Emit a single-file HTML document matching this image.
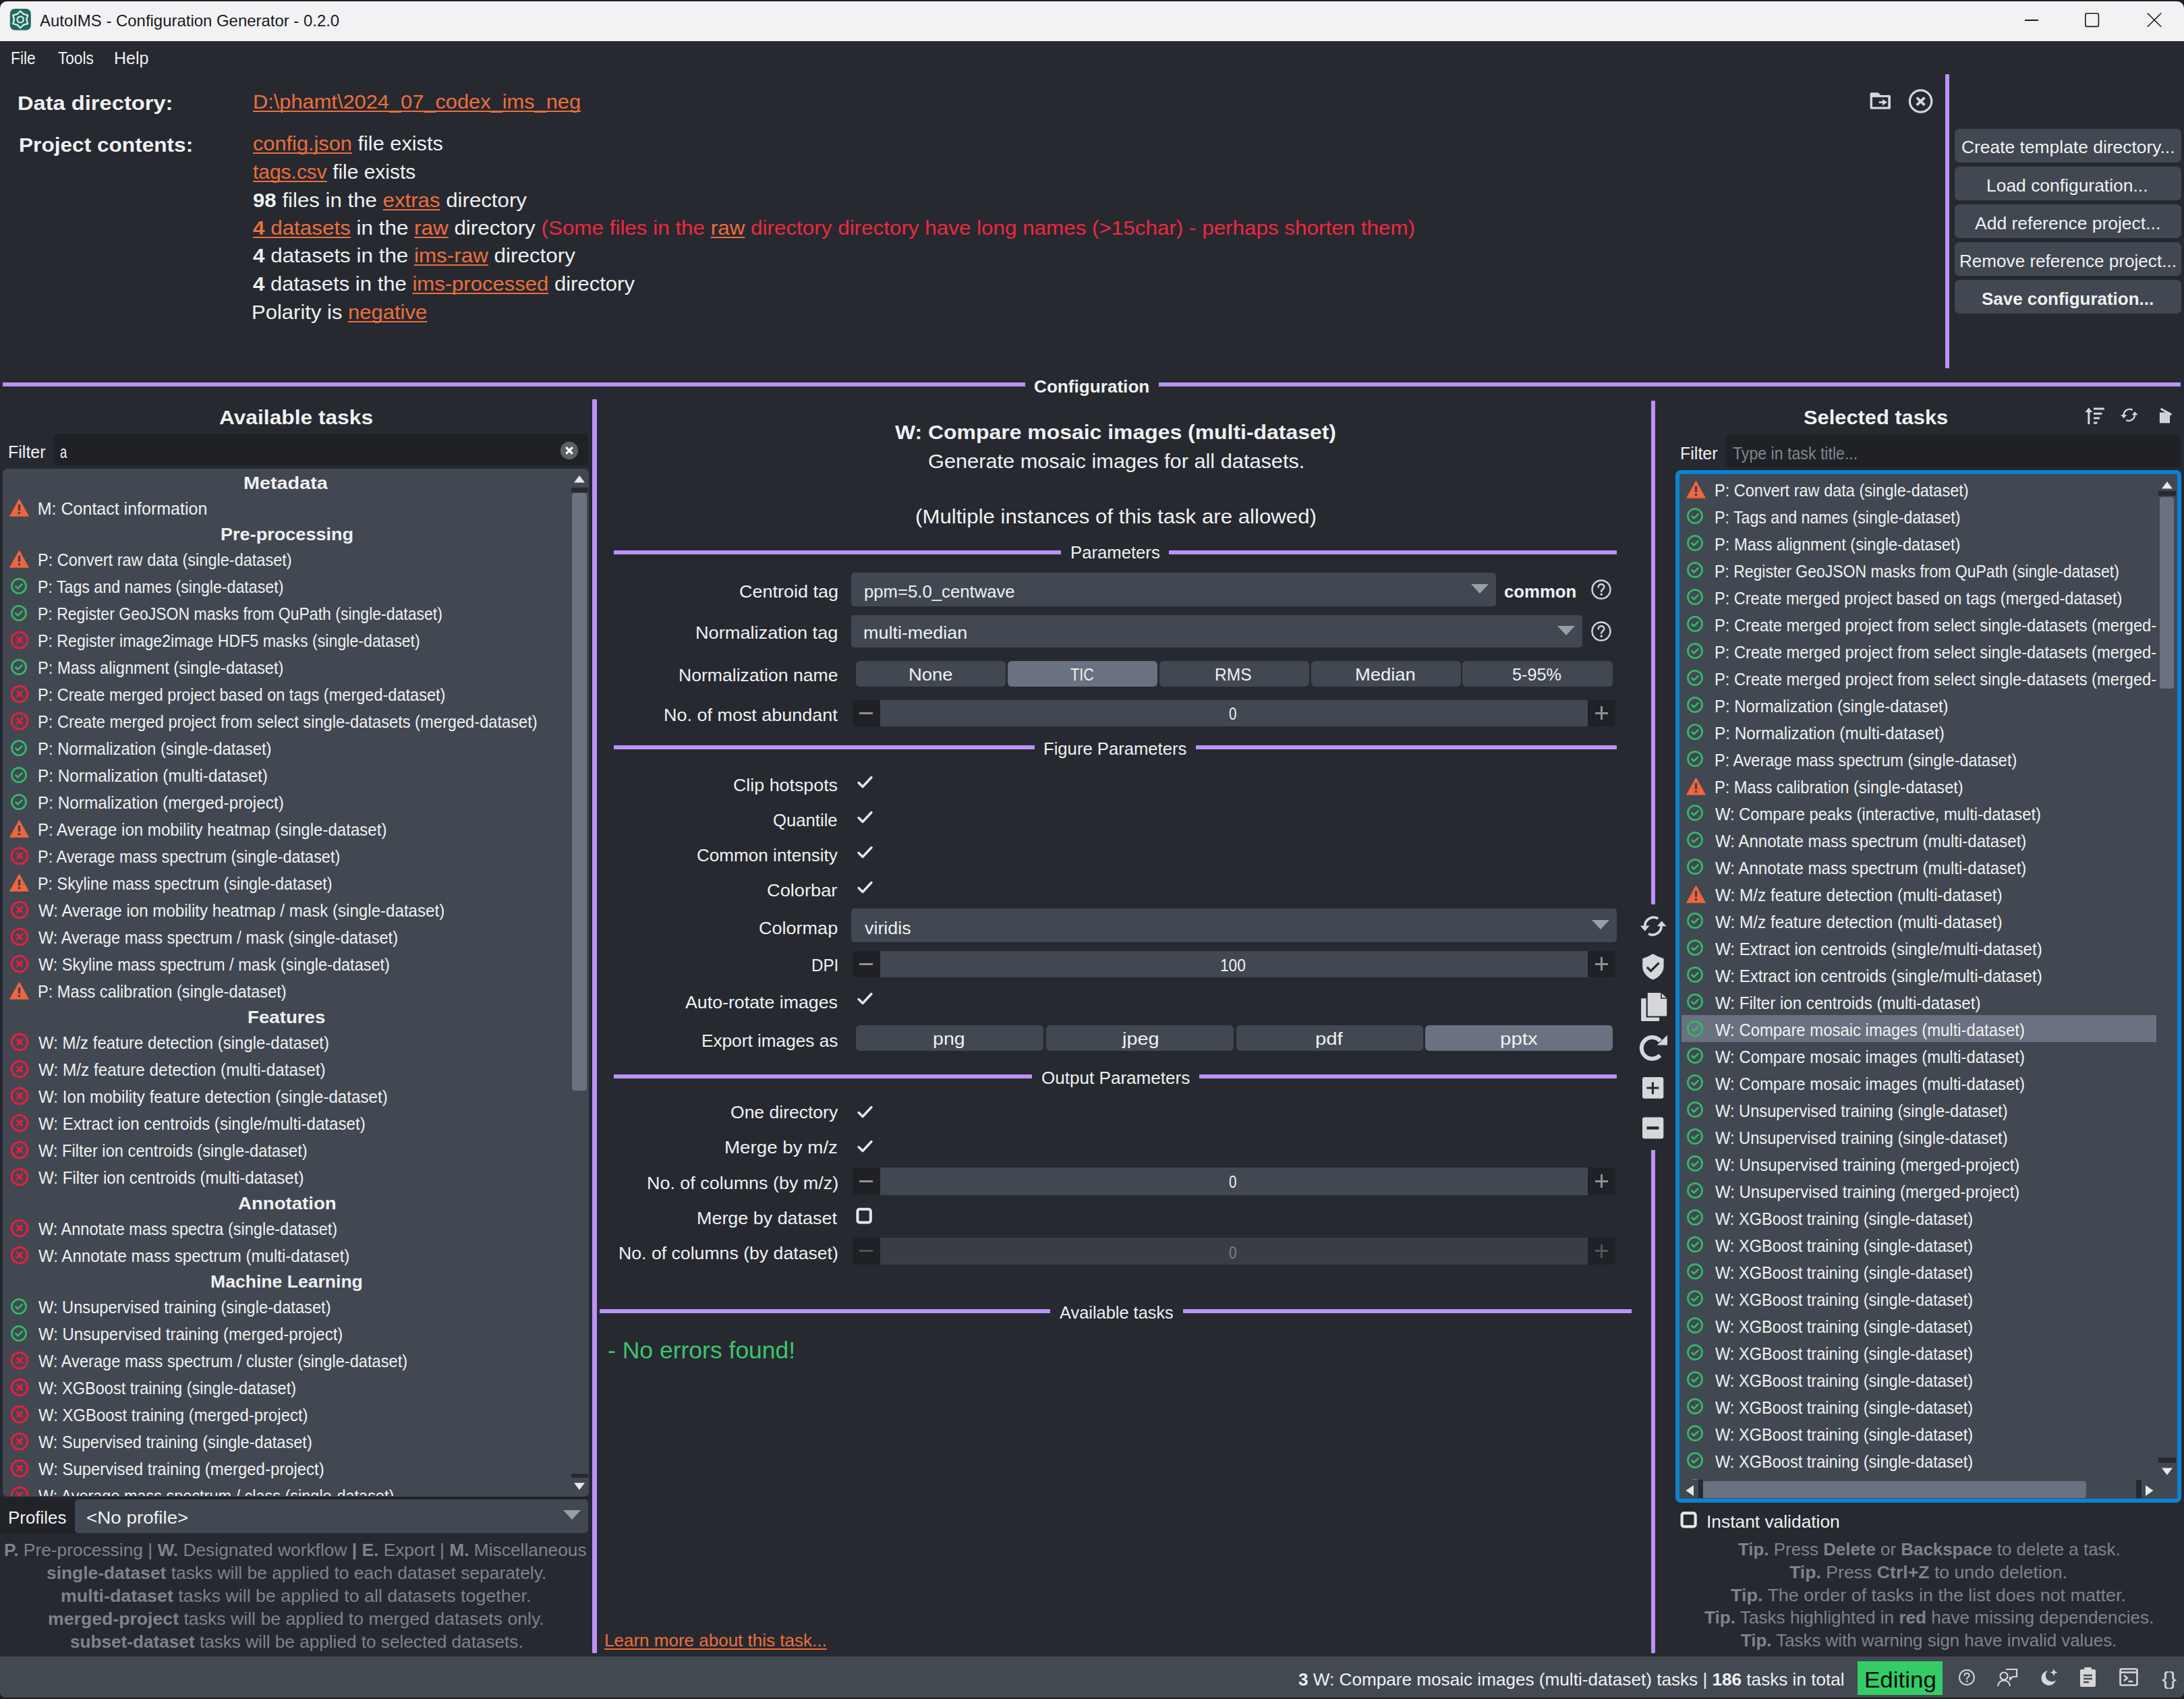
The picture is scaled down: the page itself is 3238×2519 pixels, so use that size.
<!DOCTYPE html><html><head><meta charset="utf-8"><title>AutoIMS</title><style>
*{margin:0;padding:0}
html,body{width:3238px;height:2519px;overflow:hidden;background:#1d1e22}
body{position:relative;font-family:"Liberation Sans",sans-serif}
.r,.t,.s,.clip{position:absolute}
.clip{overflow:hidden}
.t{white-space:nowrap;line-height:1;transform-origin:0 0}
.u{text-decoration:underline;text-decoration-thickness:2px;text-underline-offset:3px;color:#ef6e3c}
b{font-weight:700}
.u{text-decoration-skip-ink:none}
</style></head><body>
<svg width="0" height="0" style="position:absolute">
<defs>
<symbol id="warn" viewBox="0 0 29 27"><path d="M14.5 1.2 L28.4 26.2 L0.6 26.2 Z" fill="#f0653d" stroke="#f0653d" stroke-width="1" stroke-linejoin="round"/><rect x="12.9" y="9" width="3.2" height="9" fill="#3d424a"/><rect x="12.9" y="20" width="3.2" height="3.2" fill="#3d424a"/></symbol>
<symbol id="ok" viewBox="0 0 26 26"><circle cx="13" cy="13" r="10.6" fill="none" stroke="#34b86a" stroke-width="2.7"/><path d="M7.6 12.8 L11.4 16.4 L18.4 9.6" fill="none" stroke="#34b86a" stroke-width="2.7"/></symbol>
<symbol id="err" viewBox="0 0 28 28"><circle cx="14" cy="14" r="11.8" fill="none" stroke="#e81e40" stroke-width="3"/><path d="M9.6 9.4 L18.4 18.4 M18.4 9.4 L9.6 18.4" fill="none" stroke="#e81e40" stroke-width="3"/></symbol>
<symbol id="chk" viewBox="0 0 24 24"><path d="M2.5 12.5 L8.5 18.5 L21.5 4.5" fill="none" stroke="#e6e7e9" stroke-width="3.4" stroke-linecap="round" stroke-linejoin="round"/></symbol>
<symbol id="help" viewBox="0 0 32 32"><circle cx="16" cy="16" r="13.5" fill="none" stroke="#d4d6d9" stroke-width="2.4"/><path d="M11.6 12.6 C11.6 9.8 13.6 8.2 16 8.2 C18.6 8.2 20.4 9.9 20.4 12.2 C20.4 15.4 16.2 15.6 16.2 19" fill="none" stroke="#d4d6d9" stroke-width="2.4" stroke-linecap="round"/><circle cx="16.2" cy="23.2" r="1.7" fill="#d4d6d9"/></symbol>
<symbol id="ddarrow" viewBox="0 0 28 16"><path d="M1 1 L27 1 L14 15 Z" fill="#9a9fa6"/></symbol>
</defs></svg>
<div class="r" style="left:0.0px;top:2.0px;width:3238.0px;height:59.0px;background:#f2f2f5;border-radius:10px 10px 0 0;"></div>
<svg class="s" style="left:14.0px;top:13.0px" width="32" height="32" viewBox="0 0 32 32"><rect x="0.8" y="0" width="31" height="31.8" rx="7" fill="#1f6a5d"/><path d="M16.20 3.30 L20.80 7.93 L27.11 9.60 L25.40 15.90 L27.11 22.20 L20.80 23.87 L16.20 28.50 L11.60 23.87 L5.29 22.20 L7.00 15.90 L5.29 9.60 L11.60 7.93 Z" fill="none" stroke="#dcefea" stroke-width="2.3" stroke-linejoin="round"/><circle cx="16.2" cy="15.9" r="4.6" fill="none" stroke="#dcefea" stroke-width="2.2"/></svg>
<div class="t" id="t0" style="left:58.9px;top:19.0px;font-size:24px;color:#1a1a1a;transform:scaleX(0.9969);">AutoIMS - Configuration Generator - 0.2.0</div>
<div class="r" style="left:3001.5px;top:29.2px;width:20.5px;height:2.2px;background:#1a1a1a;"></div>
<svg class="s" style="left:3090.0px;top:18.0px" width="24" height="24" viewBox="0 0 24 24"><rect x="1.8" y="1.8" width="19.6" height="19.6" rx="2.5" fill="none" stroke="#1a1a1a" stroke-width="1.6"/></svg>
<svg class="s" style="left:3182.0px;top:18.0px" width="24" height="24" viewBox="0 0 24 24"><path d="M1.8 1.5 L22.2 21.8 M22.2 1.5 L1.8 21.8" stroke="#1a1a1a" stroke-width="1.6"/></svg>
<div class="r" style="left:0.0px;top:61.0px;width:3238.0px;height:2395.0px;background:#262930;"></div>
<div class="t" id="t1" style="left:15.9px;top:74.0px;font-size:25px;color:#f0f1f2;transform:scaleX(0.9128);">File</div>
<div class="t" id="t2" style="left:85.6px;top:74.0px;font-size:25px;color:#f0f1f2;transform:scaleX(0.9034);">Tools</div>
<div class="t" id="t3" style="left:169.0px;top:74.0px;font-size:25px;color:#f0f1f2;">Help</div>
<div class="t" id="t4" style="left:26.1px;top:138.0px;font-size:30px;font-weight:700;color:#f0f1f2;transform:scaleX(1.0885);">Data directory:</div>
<div class="t" id="t5" style="left:375.0px;top:136.0px;font-size:30px;color:#ef6e3c;transform:scaleX(1.0262);"><span class="u">D:\phamt\2024_07_codex_ims_neg</span></div>
<div class="t" id="t6" style="left:27.9px;top:200.0px;font-size:30px;font-weight:700;color:#f0f1f2;transform:scaleX(1.0537);">Project contents:</div>
<div class="t" id="t7" style="left:375.0px;top:198.0px;font-size:30px;color:#f0f1f2;transform:scaleX(1.0244);"><span class="u">config.json</span> file exists</div>
<div class="t" id="t8" style="left:375.0px;top:240.0px;font-size:30px;color:#f0f1f2;transform:scaleX(0.9979);"><span class="u">tags.csv</span> file exists</div>
<div class="t" id="t9" style="left:375.0px;top:282.0px;font-size:30px;color:#f0f1f2;transform:scaleX(1.0402);"><b>98</b> files in the <span class="u">extras</span> directory</div>
<div class="t" id="t10" style="left:375.0px;top:323.0px;font-size:30px;color:#f0f1f2;transform:scaleX(1.0464);"><span class="u"><b>4</b> datasets</span> in the <span class="u">raw</span> directory <span style="color:#f0283e">(Some files in the <span class="u">raw</span> directory directory have long names (&gt;15char) - perhaps shorten them)</span></div>
<div class="t" id="t11" style="left:375.0px;top:364.0px;font-size:30px;color:#f0f1f2;transform:scaleX(1.0460);"><b>4</b> datasets in the <span class="u">ims-raw</span> directory</div>
<div class="t" id="t12" style="left:375.0px;top:406.0px;font-size:30px;color:#f0f1f2;transform:scaleX(1.0347);"><b>4</b> datasets in the <span class="u">ims-processed</span> directory</div>
<div class="t" id="t13" style="left:372.9px;top:448.0px;font-size:30px;color:#f0f1f2;transform:scaleX(1.0336);">Polarity is <span class="u">negative</span></div>
<svg class="s" style="left:2770.0px;top:134.0px" width="36" height="30" viewBox="0 0 36 30"><path d="M2.6 5 Q2.6 3.2 4.4 3.2 L14.6 3.2 L18.2 7 L31.2 7 Q33 7 33 8.8 L33 26 Q33 27.8 31.2 27.8 L4.4 27.8 Q2.6 27.8 2.6 26 Z" fill="#d4d6d9"/><rect x="6" y="10.2" width="23.3" height="14.3" fill="#262930"/><path d="M15.6 17.6 L22.8 17.6" stroke="#d4d6d9" stroke-width="2.8"/><path d="M21 13 L27.9 17.6 L21 22.6 Z" fill="#d4d6d9"/></svg>
<svg class="s" style="left:2829.0px;top:131.0px" width="38" height="38" viewBox="0 0 38 38"><circle cx="18.6" cy="19" r="16.2" fill="none" stroke="#d4d6d9" stroke-width="3.2"/><path d="M12.8 13.6 L24.4 24.8 M24.4 13.6 L12.8 24.8" stroke="#d4d6d9" stroke-width="3.8"/></svg>
<div class="r" style="left:2884.0px;top:110.0px;width:6.0px;height:436.0px;background:#bb92f5;border-radius:1px;"></div>
<div class="r" style="left:2898.0px;top:191.0px;width:335.5px;height:49.5px;background:#414851;border-radius:7px;"></div>
<div class="t" id="t14" style="left:2907.9px;top:206.0px;font-size:25px;color:#f0f1f2;transform:scaleX(1.0562);">Create template directory...</div>
<div class="r" style="left:2898.0px;top:247.1px;width:335.5px;height:49.5px;background:#414851;border-radius:7px;"></div>
<div class="t" id="t15" style="left:2945.3px;top:263.0px;font-size:25px;color:#f0f1f2;transform:scaleX(1.0571);">Load configuration...</div>
<div class="r" style="left:2898.0px;top:303.2px;width:335.5px;height:49.5px;background:#414851;border-radius:7px;"></div>
<div class="t" id="t16" style="left:2928.3px;top:319.0px;font-size:25px;color:#f0f1f2;transform:scaleX(1.0593);">Add reference project...</div>
<div class="r" style="left:2898.0px;top:359.3px;width:335.5px;height:49.5px;background:#414851;border-radius:7px;"></div>
<div class="t" id="t17" style="left:2905.3px;top:375.0px;font-size:25px;color:#f0f1f2;transform:scaleX(1.0435);">Remove reference project...</div>
<div class="r" style="left:2898.0px;top:415.4px;width:335.5px;height:49.5px;background:#414851;border-radius:7px;"></div>
<div class="t" id="t18" style="left:2938.0px;top:431.0px;font-size:25px;font-weight:700;color:#f0f1f2;transform:scaleX(1.0376);">Save configuration...</div>
<div class="r" style="left:4.0px;top:567.0px;width:1515.5px;height:6.0px;background:#bb92f5;"></div>
<div class="r" style="left:1718.3px;top:567.0px;width:1514.7px;height:6.0px;background:#bb92f5;"></div>
<div class="t" id="t19" style="left:1533.3px;top:560.0px;font-size:26px;font-weight:700;color:#f0f1f2;transform:scaleX(1.0053);">Configuration</div>
<div class="t" id="t20" style="left:324.7px;top:604.0px;font-size:30px;font-weight:700;color:#f0f1f2;transform:scaleX(1.0572);">Available tasks</div>
<div class="t" id="t21" style="left:12.0px;top:658.0px;font-size:25px;color:#f0f1f2;">Filter</div>
<div class="r" style="left:80.3px;top:643.4px;width:791.7px;height:47.1px;background:#1f2126;border-radius:5px;"></div>
<div class="t" id="t22" style="left:89.0px;top:658.0px;font-size:25px;color:#f0f1f2;transform:scaleX(0.7333);">a</div>
<svg class="s" style="left:830.0px;top:654.0px" width="28" height="28" viewBox="0 0 28 28"><circle cx="14" cy="14" r="13.2" fill="#5b5f66"/><path d="M9.2 9.2 L18.8 18.8 M18.8 9.2 L9.2 18.8" stroke="#ffffff" stroke-width="3.2"/></svg>
<div class="r" style="left:4.0px;top:695.0px;width:869.0px;height:1523.5px;background:#414851;border-radius:7px;"></div>
<div class="clip" style="left:4px;top:695px;width:843px;height:1523px">
<div class="t" id="t23" style="left:357.4px;top:9.0px;font-size:25px;font-weight:700;color:#f0f1f2;transform:scaleX(1.1519);">Metadata</div>
<svg class="s" style="left:9.9px;top:44.0px" width="29" height="27"><use href="#warn"/></svg>
<div class="t" id="t24" style="left:51.8px;top:47.0px;font-size:25px;color:#f0f1f2;">M: Contact information</div>
<div class="t" id="t25" style="left:323.3px;top:85.0px;font-size:25px;font-weight:700;color:#f0f1f2;transform:scaleX(1.0828);">Pre-processing</div>
<svg class="s" style="left:9.9px;top:120.0px" width="29" height="27"><use href="#warn"/></svg>
<div class="t" id="t26" style="left:51.9px;top:123.0px;font-size:25px;color:#f0f1f2;transform:scaleX(0.9412);">P: Convert raw data (single-dataset)</div>
<svg class="s" style="left:11.0px;top:160.8px" width="26" height="26"><use href="#ok"/></svg>
<div class="t" id="t27" style="left:51.9px;top:163.0px;font-size:25px;color:#f0f1f2;transform:scaleX(0.9276);">P: Tags and names (single-dataset)</div>
<svg class="s" style="left:11.0px;top:200.8px" width="26" height="26"><use href="#ok"/></svg>
<div class="t" id="t28" style="left:51.9px;top:203.0px;font-size:25px;color:#f0f1f2;transform:scaleX(0.9206);">P: Register GeoJSON masks from QuPath (single-dataset)</div>
<svg class="s" style="left:10.8px;top:240.0px" width="28" height="28"><use href="#err"/></svg>
<div class="t" id="t29" style="left:51.9px;top:243.0px;font-size:25px;color:#f0f1f2;transform:scaleX(0.9271);">P: Register image2image HDF5 masks (single-dataset)</div>
<svg class="s" style="left:11.0px;top:280.8px" width="26" height="26"><use href="#ok"/></svg>
<div class="t" id="t30" style="left:51.9px;top:283.0px;font-size:25px;color:#f0f1f2;transform:scaleX(0.9470);">P: Mass alignment (single-dataset)</div>
<svg class="s" style="left:10.8px;top:320.0px" width="28" height="28"><use href="#err"/></svg>
<div class="t" id="t31" style="left:51.9px;top:323.0px;font-size:25px;color:#f0f1f2;transform:scaleX(0.9414);">P: Create merged project based on tags (merged-dataset)</div>
<svg class="s" style="left:10.8px;top:360.0px" width="28" height="28"><use href="#err"/></svg>
<div class="t" id="t32" style="left:51.9px;top:363.0px;font-size:25px;color:#f0f1f2;transform:scaleX(0.9468);">P: Create merged project from select single-datasets (merged-dataset)</div>
<svg class="s" style="left:11.0px;top:400.8px" width="26" height="26"><use href="#ok"/></svg>
<div class="t" id="t33" style="left:51.8px;top:403.0px;font-size:25px;color:#f0f1f2;transform:scaleX(0.9557);">P: Normalization (single-dataset)</div>
<svg class="s" style="left:11.0px;top:440.8px" width="26" height="26"><use href="#ok"/></svg>
<div class="t" id="t34" style="left:51.8px;top:443.0px;font-size:25px;color:#f0f1f2;transform:scaleX(0.9736);">P: Normalization (multi-dataset)</div>
<svg class="s" style="left:11.0px;top:480.8px" width="26" height="26"><use href="#ok"/></svg>
<div class="t" id="t35" style="left:51.8px;top:483.0px;font-size:25px;color:#f0f1f2;transform:scaleX(0.9724);">P: Normalization (merged-project)</div>
<svg class="s" style="left:9.9px;top:520.0px" width="29" height="27"><use href="#warn"/></svg>
<div class="t" id="t36" style="left:51.8px;top:523.0px;font-size:25px;color:#f0f1f2;transform:scaleX(0.9630);">P: Average ion mobility heatmap (single-dataset)</div>
<svg class="s" style="left:10.8px;top:560.0px" width="28" height="28"><use href="#err"/></svg>
<div class="t" id="t37" style="left:51.9px;top:563.0px;font-size:25px;color:#f0f1f2;transform:scaleX(0.9387);">P: Average mass spectrum (single-dataset)</div>
<svg class="s" style="left:9.9px;top:600.0px" width="29" height="27"><use href="#warn"/></svg>
<div class="t" id="t38" style="left:51.9px;top:603.0px;font-size:25px;color:#f0f1f2;transform:scaleX(0.9351);">P: Skyline mass spectrum (single-dataset)</div>
<svg class="s" style="left:10.8px;top:640.0px" width="28" height="28"><use href="#err"/></svg>
<div class="t" id="t39" style="left:52.8px;top:643.0px;font-size:25px;color:#f0f1f2;transform:scaleX(0.9645);">W: Average ion mobility heatmap / mask (single-dataset)</div>
<svg class="s" style="left:10.8px;top:680.0px" width="28" height="28"><use href="#err"/></svg>
<div class="t" id="t40" style="left:52.8px;top:683.0px;font-size:25px;color:#f0f1f2;transform:scaleX(0.9441);">W: Average mass spectrum / mask (single-dataset)</div>
<svg class="s" style="left:10.8px;top:720.0px" width="28" height="28"><use href="#err"/></svg>
<div class="t" id="t41" style="left:52.8px;top:723.0px;font-size:25px;color:#f0f1f2;transform:scaleX(0.9405);">W: Skyline mass spectrum / mask (single-dataset)</div>
<svg class="s" style="left:9.9px;top:760.0px" width="29" height="27"><use href="#warn"/></svg>
<div class="t" id="t42" style="left:51.9px;top:763.0px;font-size:25px;color:#f0f1f2;transform:scaleX(0.9443);">P: Mass calibration (single-dataset)</div>
<div class="t" id="t43" style="left:362.9px;top:801.0px;font-size:25px;font-weight:700;color:#f0f1f2;transform:scaleX(1.1068);">Features</div>
<svg class="s" style="left:10.8px;top:836.0px" width="28" height="28"><use href="#err"/></svg>
<div class="t" id="t44" style="left:52.8px;top:839.0px;font-size:25px;color:#f0f1f2;transform:scaleX(0.9581);">W: M/z feature detection (single-dataset)</div>
<svg class="s" style="left:10.8px;top:876.0px" width="28" height="28"><use href="#err"/></svg>
<div class="t" id="t45" style="left:52.8px;top:879.0px;font-size:25px;color:#f0f1f2;transform:scaleX(0.9736);">W: M/z feature detection (multi-dataset)</div>
<svg class="s" style="left:10.8px;top:916.0px" width="28" height="28"><use href="#err"/></svg>
<div class="t" id="t46" style="left:52.8px;top:919.0px;font-size:25px;color:#f0f1f2;transform:scaleX(0.9660);">W: Ion mobility feature detection (single-dataset)</div>
<svg class="s" style="left:10.8px;top:956.0px" width="28" height="28"><use href="#err"/></svg>
<div class="t" id="t47" style="left:52.8px;top:959.0px;font-size:25px;color:#f0f1f2;transform:scaleX(0.9645);">W: Extract ion centroids (single/multi-dataset)</div>
<svg class="s" style="left:10.8px;top:996.0px" width="28" height="28"><use href="#err"/></svg>
<div class="t" id="t48" style="left:52.8px;top:999.0px;font-size:25px;color:#f0f1f2;transform:scaleX(0.9481);">W: Filter ion centroids (single-dataset)</div>
<svg class="s" style="left:10.8px;top:1036.0px" width="28" height="28"><use href="#err"/></svg>
<div class="t" id="t49" style="left:52.8px;top:1039.0px;font-size:25px;color:#f0f1f2;transform:scaleX(0.9644);">W: Filter ion centroids (multi-dataset)</div>
<div class="t" id="t50" style="left:348.9px;top:1077.0px;font-size:25px;font-weight:700;color:#f0f1f2;transform:scaleX(1.1038);">Annotation</div>
<svg class="s" style="left:10.8px;top:1112.0px" width="28" height="28"><use href="#err"/></svg>
<div class="t" id="t51" style="left:52.8px;top:1115.0px;font-size:25px;color:#f0f1f2;transform:scaleX(0.9417);">W: Annotate mass spectra (single-dataset)</div>
<svg class="s" style="left:10.8px;top:1152.0px" width="28" height="28"><use href="#err"/></svg>
<div class="t" id="t52" style="left:52.8px;top:1155.0px;font-size:25px;color:#f0f1f2;transform:scaleX(0.9634);">W: Annotate mass spectrum (multi-dataset)</div>
<div class="t" id="t53" style="left:308.2px;top:1193.0px;font-size:25px;font-weight:700;color:#f0f1f2;transform:scaleX(1.0626);">Machine Learning</div>
<svg class="s" style="left:11.0px;top:1228.8px" width="26" height="26"><use href="#ok"/></svg>
<div class="t" id="t54" style="left:52.8px;top:1231.0px;font-size:25px;color:#f0f1f2;transform:scaleX(0.9464);">W: Unsupervised training (single-dataset)</div>
<svg class="s" style="left:11.0px;top:1268.8px" width="26" height="26"><use href="#ok"/></svg>
<div class="t" id="t55" style="left:52.8px;top:1271.0px;font-size:25px;color:#f0f1f2;transform:scaleX(0.9591);">W: Unsupervised training (merged-project)</div>
<svg class="s" style="left:10.8px;top:1308.0px" width="28" height="28"><use href="#err"/></svg>
<div class="t" id="t56" style="left:52.8px;top:1311.0px;font-size:25px;color:#f0f1f2;transform:scaleX(0.9458);">W: Average mass spectrum / cluster (single-dataset)</div>
<svg class="s" style="left:10.8px;top:1348.0px" width="28" height="28"><use href="#err"/></svg>
<div class="t" id="t57" style="left:52.8px;top:1351.0px;font-size:25px;color:#f0f1f2;transform:scaleX(0.9428);">W: XGBoost training (single-dataset)</div>
<svg class="s" style="left:10.8px;top:1388.0px" width="28" height="28"><use href="#err"/></svg>
<div class="t" id="t58" style="left:52.8px;top:1391.0px;font-size:25px;color:#f0f1f2;transform:scaleX(0.9564);">W: XGBoost training (merged-project)</div>
<svg class="s" style="left:10.8px;top:1428.0px" width="28" height="28"><use href="#err"/></svg>
<div class="t" id="t59" style="left:52.8px;top:1431.0px;font-size:25px;color:#f0f1f2;transform:scaleX(0.9429);">W: Supervised training (single-dataset)</div>
<svg class="s" style="left:10.8px;top:1468.0px" width="28" height="28"><use href="#err"/></svg>
<div class="t" id="t60" style="left:52.8px;top:1471.0px;font-size:25px;color:#f0f1f2;transform:scaleX(0.9568);">W: Supervised training (merged-project)</div>
<svg class="s" style="left:10.8px;top:1508.0px" width="28" height="28"><use href="#err"/></svg>
<div class="t" id="t61" style="left:52.8px;top:1511.0px;font-size:25px;color:#f0f1f2;transform:scaleX(0.9385);">W: Average mass spectrum / class (single-dataset)</div>
</div>
<svg class="s" style="left:850.0px;top:704.0px" width="18" height="12" viewBox="0 0 18 12"><path d="M1 11.5 L9 1 L17 11.5 Z" fill="#e8e8ea"/></svg>
<div class="r" style="left:847.0px;top:723.0px;width:25.0px;height:6.5px;background:#262930;"></div>
<div class="r" style="left:848.0px;top:731.0px;width:22.0px;height:886.0px;background:#6a7180;border-radius:4px;"></div>
<div class="r" style="left:847.0px;top:2184.5px;width:25.0px;height:6.5px;background:#262930;"></div>
<svg class="s" style="left:850.0px;top:2198.0px" width="18" height="12" viewBox="0 0 18 12"><path d="M1 0.5 L17 0.5 L9 11 Z" fill="#e8e8ea"/></svg>
<div class="r" style="left:0.0px;top:2218.5px;width:872.0px;height:54.5px;background:#212329;"></div>
<div class="r" style="left:110.8px;top:2223.0px;width:761.6px;height:49.5px;background:#414851;border-radius:5px;"></div>
<div class="t" id="t62" style="left:12.0px;top:2238.0px;font-size:25px;color:#f0f1f2;transform:scaleX(1.0366);">Profiles</div>
<div class="t" id="t63" style="left:127.9px;top:2238.0px;font-size:25px;color:#f0f1f2;transform:scaleX(1.1111);">&lt;No profile&gt;</div>
<svg class="s" style="left:834.0px;top:2238.0px" width="28" height="16"><use href="#ddarrow"/></svg>
<div class="t" id="t64" style="left:6.2px;top:2286.0px;font-size:25px;color:#7d848c;transform:scaleX(1.0534);"><b>P.</b> Pre-processing | <b>W.</b> Designated workflow <b>| E.</b> Export | <b>M.</b> Miscellaneous</div>
<div class="t" id="t65" style="left:68.5px;top:2320.0px;font-size:25px;color:#7d848c;transform:scaleX(1.0549);"><b>single-dataset</b> tasks will be applied to each dataset separately.</div>
<div class="t" id="t66" style="left:89.6px;top:2354.0px;font-size:25px;color:#7d848c;transform:scaleX(1.0725);"><b>multi-dataset</b> tasks will be applied to all datasets together.</div>
<div class="t" id="t67" style="left:71.4px;top:2388.0px;font-size:25px;color:#7d848c;transform:scaleX(1.0661);"><b>merged-project</b> tasks will be applied to merged datasets only.</div>
<div class="t" id="t68" style="left:104.0px;top:2422.0px;font-size:25px;color:#7d848c;transform:scaleX(1.0463);"><b>subset-dataset</b> tasks will be applied to selected datasets.</div>
<div class="r" style="left:878.0px;top:592.0px;width:6.5px;height:1858.5px;background:#bb92f5;border-radius:1px;"></div>
<div class="r" style="left:2448.0px;top:594.0px;width:6.0px;height:747.0px;background:#bb92f5;border-radius:1px;"></div>
<div class="r" style="left:2448.0px;top:1704.5px;width:6.0px;height:746.0px;background:#bb92f5;border-radius:1px;"></div>
<div class="t" id="t69" style="left:1326.7px;top:627.0px;font-size:29px;font-weight:700;color:#f0f1f2;transform:scaleX(1.1008);">W: Compare mosaic images (multi-dataset)</div>
<div class="t" id="t70" style="left:1375.8px;top:670.0px;font-size:29px;color:#f0f1f2;transform:scaleX(1.0594);">Generate mosaic images for all datasets.</div>
<div class="t" id="t71" style="left:1356.6px;top:752.0px;font-size:29px;color:#f0f1f2;transform:scaleX(1.0760);">(Multiple instances of this task are allowed)</div>
<div class="r" style="left:910.4px;top:815.5px;width:663.1px;height:6.0px;background:#bb92f5;"></div>
<div class="r" style="left:1733.0px;top:815.5px;width:664.0px;height:6.0px;background:#bb92f5;"></div>
<div class="t" id="t72" style="left:1586.5px;top:807.0px;font-size:25px;color:#f0f1f2;transform:scaleX(1.0273);">Parameters</div>
<div class="r" style="left:910.4px;top:1104.5px;width:623.3px;height:6.0px;background:#bb92f5;"></div>
<div class="r" style="left:1773.0px;top:1104.5px;width:624.0px;height:6.0px;background:#bb92f5;"></div>
<div class="t" id="t73" style="left:1546.7px;top:1098.0px;font-size:25px;color:#f0f1f2;transform:scaleX(1.0257);">Figure Parameters</div>
<div class="r" style="left:910.4px;top:1593.0px;width:619.6px;height:6.0px;background:#bb92f5;"></div>
<div class="r" style="left:1778.0px;top:1593.0px;width:619.0px;height:6.0px;background:#bb92f5;"></div>
<div class="t" id="t74" style="left:1544.0px;top:1586.0px;font-size:25px;color:#f0f1f2;transform:scaleX(1.0427);">Output Parameters</div>
<div class="r" style="left:888.7px;top:1941.0px;width:668.3px;height:6.0px;background:#bb92f5;"></div>
<div class="r" style="left:1753.5px;top:1941.0px;width:665.2px;height:6.0px;background:#bb92f5;"></div>
<div class="t" id="t75" style="left:1571.0px;top:1934.0px;font-size:25px;color:#f0f1f2;transform:scaleX(1.0151);">Available tasks</div>
<div class="t" id="t76" style="left:1095.9px;top:865.0px;font-size:25px;color:#f0f1f2;transform:scaleX(1.0799);">Centroid tag</div>
<div class="r" style="left:1262.0px;top:849.4px;width:956.0px;height:49.2px;background:#414851;border-radius:5px;"></div>
<div class="t" id="t77" style="left:1280.5px;top:865.0px;font-size:25px;color:#f0f1f2;transform:scaleX(1.0282);">ppm=5.0_centwave</div>
<svg class="s" style="left:2180.0px;top:865.0px" width="28" height="16"><use href="#ddarrow"/></svg>
<div class="t" id="t78" style="left:2230.0px;top:865.0px;font-size:25px;font-weight:700;color:#f0f1f2;transform:scaleX(1.0291);">common</div>
<svg class="s" style="left:2358.0px;top:858.0px" width="32" height="32"><use href="#help"/></svg>
<div class="t" id="t79" style="left:1030.9px;top:926.0px;font-size:25px;color:#f0f1f2;transform:scaleX(1.0865);">Normalization tag</div>
<div class="r" style="left:1262.0px;top:911.6px;width:1084.0px;height:48.4px;background:#414851;border-radius:5px;"></div>
<div class="t" id="t80" style="left:1280.4px;top:926.0px;font-size:25px;color:#f0f1f2;transform:scaleX(1.0773);">multi-median</div>
<svg class="s" style="left:2308.0px;top:926.8px" width="28" height="16"><use href="#ddarrow"/></svg>
<svg class="s" style="left:2358.0px;top:920.0px" width="32" height="32"><use href="#help"/></svg>
<div class="t" id="t81" style="left:1005.5px;top:989.0px;font-size:25px;color:#f0f1f2;transform:scaleX(1.0638);">Normalization name</div>
<div class="r" style="left:1268.5px;top:979.6px;width:222.5px;height:38.9px;background:#414851;border-radius:6px;"></div>
<div class="t" id="t82" style="left:1346.9px;top:988.0px;font-size:25px;color:#f0f1f2;transform:scaleX(1.0983);">None</div>
<div class="r" style="left:1494.0px;top:979.6px;width:221.6px;height:38.9px;background:#6a7180;border-radius:6px;"></div>
<div class="t" id="t83" style="left:1586.8px;top:988.0px;font-size:25px;color:#f0f1f2;transform:scaleX(0.8675);">TIC</div>
<div class="r" style="left:1718.5px;top:979.6px;width:222.5px;height:38.9px;background:#414851;border-radius:6px;"></div>
<div class="t" id="t84" style="left:1801.0px;top:988.0px;font-size:25px;color:#f0f1f2;transform:scaleX(0.9815);">RMS</div>
<div class="r" style="left:1944.0px;top:979.6px;width:221.5px;height:38.9px;background:#414851;border-radius:6px;"></div>
<div class="t" id="t85" style="left:2008.9px;top:988.0px;font-size:25px;color:#f0f1f2;transform:scaleX(1.0938);">Median</div>
<div class="r" style="left:2168.4px;top:979.6px;width:222.6px;height:38.9px;background:#414851;border-radius:6px;"></div>
<div class="t" id="t86" style="left:2242.0px;top:988.0px;font-size:25px;color:#f0f1f2;transform:scaleX(1.0083);">5-95%</div>
<div class="t" id="t87" style="left:983.9px;top:1048.0px;font-size:25px;color:#f0f1f2;transform:scaleX(1.0786);">No. of most abundant</div>
<div class="r" style="left:1264.0px;top:1037.5px;width:41.2px;height:39.5px;background:#1f2126;border-radius:4px;"></div>
<div class="r" style="left:1305.2px;top:1037.5px;width:1048.4px;height:39.5px;background:#414851;"></div>
<div class="r" style="left:2353.6px;top:1037.5px;width:41.4px;height:39.5px;background:#1f2126;border-radius:4px;"></div>
<div class="r" style="left:1274.4px;top:1055.7px;width:19.8px;height:3.2px;background:#8f9399;"></div>
<div class="r" style="left:2364.5px;top:1055.7px;width:19.8px;height:3.2px;background:#8f9399;"></div>
<div class="r" style="left:2372.8px;top:1047.3px;width:3.2px;height:19.8px;background:#8f9399;"></div>
<div class="t" id="t88" style="left:1822.0px;top:1046.0px;font-size:25px;color:#f0f1f2;transform:scaleX(0.8214);">0</div>
<div class="t" id="t89" style="left:1087.2px;top:1152.0px;font-size:25px;color:#f0f1f2;transform:scaleX(1.0727);">Clip hotspots</div>
<svg class="s" style="left:1269.5px;top:1148.0px" width="25" height="24"><use href="#chk"/></svg>
<div class="t" id="t90" style="left:1146.2px;top:1204.0px;font-size:25px;color:#f0f1f2;transform:scaleX(1.0269);">Quantile</div>
<svg class="s" style="left:1269.5px;top:1200.0px" width="25" height="24"><use href="#chk"/></svg>
<div class="t" id="t91" style="left:1033.0px;top:1256.0px;font-size:25px;color:#f0f1f2;transform:scaleX(1.0437);">Common intensity</div>
<svg class="s" style="left:1269.5px;top:1252.0px" width="25" height="24"><use href="#chk"/></svg>
<div class="t" id="t92" style="left:1137.2px;top:1308.0px;font-size:25px;color:#f0f1f2;transform:scaleX(1.0884);">Colorbar</div>
<svg class="s" style="left:1269.5px;top:1304.0px" width="25" height="24"><use href="#chk"/></svg>
<div class="t" id="t93" style="left:1124.9px;top:1364.0px;font-size:25px;color:#f0f1f2;transform:scaleX(1.0813);">Colormap</div>
<div class="r" style="left:1262.0px;top:1347.4px;width:1135.0px;height:49.2px;background:#414851;border-radius:5px;"></div>
<div class="t" id="t94" style="left:1281.5px;top:1364.0px;font-size:25px;color:#f0f1f2;transform:scaleX(1.0734);">viridis</div>
<svg class="s" style="left:2359.0px;top:1363.0px" width="28" height="16"><use href="#ddarrow"/></svg>
<div class="t" id="t95" style="left:1203.0px;top:1419.0px;font-size:25px;color:#f0f1f2;transform:scaleX(0.9667);">DPI</div>
<div class="r" style="left:1264.0px;top:1409.6px;width:41.2px;height:39.1px;background:#1f2126;border-radius:4px;"></div>
<div class="r" style="left:1305.2px;top:1409.6px;width:1048.4px;height:39.1px;background:#414851;"></div>
<div class="r" style="left:2353.6px;top:1409.6px;width:41.4px;height:39.1px;background:#1f2126;border-radius:4px;"></div>
<div class="r" style="left:1274.4px;top:1427.6px;width:19.8px;height:3.2px;background:#8f9399;"></div>
<div class="r" style="left:2364.5px;top:1427.6px;width:19.8px;height:3.2px;background:#8f9399;"></div>
<div class="r" style="left:2372.8px;top:1419.2px;width:3.2px;height:19.8px;background:#8f9399;"></div>
<div class="t" id="t96" style="left:1808.7px;top:1419.0px;font-size:25px;color:#f0f1f2;transform:scaleX(0.9050);">100</div>
<div class="t" id="t97" style="left:1016.0px;top:1474.0px;font-size:25px;color:#f0f1f2;transform:scaleX(1.0697);">Auto-rotate images</div>
<svg class="s" style="left:1269.5px;top:1469.0px" width="25" height="24"><use href="#chk"/></svg>
<div class="t" id="t98" style="left:1039.6px;top:1531.0px;font-size:25px;color:#f0f1f2;transform:scaleX(1.0474);">Export images as</div>
<div class="r" style="left:1268.5px;top:1519.6px;width:278.5px;height:38.7px;background:#414851;border-radius:6px;"></div>
<div class="t" id="t99" style="left:1382.9px;top:1528.0px;font-size:25px;color:#f0f1f2;transform:scaleX(1.1450);">png</div>
<div class="r" style="left:1550.6px;top:1519.6px;width:278.4px;height:38.7px;background:#414851;border-radius:6px;"></div>
<div class="t" id="t100" style="left:1664.0px;top:1528.0px;font-size:25px;color:#f0f1f2;transform:scaleX(1.1532);">jpeg</div>
<div class="r" style="left:1832.8px;top:1519.6px;width:277.2px;height:38.7px;background:#414851;border-radius:6px;"></div>
<div class="t" id="t101" style="left:1949.5px;top:1528.0px;font-size:25px;color:#f0f1f2;transform:scaleX(1.1706);">pdf</div>
<div class="r" style="left:2112.7px;top:1519.6px;width:278.3px;height:38.7px;background:#6a7180;border-radius:6px;"></div>
<div class="t" id="t102" style="left:2224.4px;top:1528.0px;font-size:25px;color:#f0f1f2;transform:scaleX(1.1783);">pptx</div>
<div class="t" id="t103" style="left:1082.6px;top:1637.0px;font-size:25px;color:#f0f1f2;transform:scaleX(1.0607);">One directory</div>
<svg class="s" style="left:1269.5px;top:1637.0px" width="25" height="24"><use href="#chk"/></svg>
<div class="t" id="t104" style="left:1074.2px;top:1689.0px;font-size:25px;color:#f0f1f2;transform:scaleX(1.1093);">Merge by m/z</div>
<svg class="s" style="left:1269.5px;top:1688.0px" width="25" height="24"><use href="#chk"/></svg>
<div class="t" id="t105" style="left:958.5px;top:1742.0px;font-size:25px;color:#f0f1f2;transform:scaleX(1.0767);">No. of columns (by m/z)</div>
<div class="r" style="left:1264.0px;top:1730.5px;width:41.2px;height:41.2px;background:#1f2126;border-radius:4px;"></div>
<div class="r" style="left:1305.2px;top:1730.5px;width:1048.4px;height:41.2px;background:#414851;"></div>
<div class="r" style="left:2353.6px;top:1730.5px;width:41.4px;height:41.2px;background:#1f2126;border-radius:4px;"></div>
<div class="r" style="left:1274.4px;top:1749.5px;width:19.8px;height:3.2px;background:#8f9399;"></div>
<div class="r" style="left:2364.5px;top:1749.5px;width:19.8px;height:3.2px;background:#8f9399;"></div>
<div class="r" style="left:2372.8px;top:1741.2px;width:3.2px;height:19.8px;background:#8f9399;"></div>
<div class="t" id="t106" style="left:1822.0px;top:1740.0px;font-size:25px;color:#f0f1f2;transform:scaleX(0.8214);">0</div>
<div class="t" id="t107" style="left:1032.9px;top:1794.0px;font-size:25px;color:#f0f1f2;transform:scaleX(1.0762);">Merge by dataset</div>
<svg class="s" style="left:1268.0px;top:1790.0px" width="28" height="26" viewBox="0 0 28 26"><rect x="3.4" y="2.8" width="19.4" height="19.6" rx="3" fill="none" stroke="#e6e7e9" stroke-width="4"/></svg>
<div class="t" id="t108" style="left:916.5px;top:1846.0px;font-size:25px;color:#f0f1f2;transform:scaleX(1.0661);">No. of columns (by dataset)</div>
<div class="r" style="left:1264.0px;top:1834.6px;width:41.2px;height:40.4px;background:#1f2126;border-radius:4px;"></div>
<div class="r" style="left:1305.2px;top:1834.6px;width:1048.4px;height:40.4px;background:#393e46;"></div>
<div class="r" style="left:2353.6px;top:1834.6px;width:41.4px;height:40.4px;background:#1f2126;border-radius:4px;"></div>
<div class="r" style="left:1274.4px;top:1853.2px;width:19.8px;height:3.2px;background:#50555c;"></div>
<div class="r" style="left:2364.5px;top:1853.2px;width:19.8px;height:3.2px;background:#50555c;"></div>
<div class="r" style="left:2372.8px;top:1844.9px;width:3.2px;height:19.8px;background:#50555c;"></div>
<div class="t" id="t109" style="left:1822.0px;top:1845.0px;font-size:25px;color:#7a7f86;transform:scaleX(0.8214);">0</div>
<div class="t" id="t110" style="left:900.7px;top:1984.0px;font-size:35px;color:#3ec46c;transform:scaleX(1.0144);">- No errors found!</div>
<div class="t" id="t111" style="left:896.0px;top:2420.0px;font-size:25px;color:#ef6e3c;transform:scaleX(1.0404);"><span class="u">Learn more about this task...</span></div>
<svg class="s" style="left:2430.0px;top:1356.0px" width="42" height="34" viewBox="0 0 42 34"><path d="M28.3 5.9 A13 13 0 0 0 8.8 18.2" fill="none" stroke="#d6d7da" stroke-width="3.6"/><path d="M1.8 16.6 L15.6 16.6 L8.7 24.6 Z" fill="#d6d7da"/><path d="M14 28.5 A13 13 0 0 0 33 15.8" fill="none" stroke="#d6d7da" stroke-width="3.6"/><path d="M26.6 17.2 L40.6 17.2 L33.6 9.4 Z" fill="#d6d7da"/></svg>
<svg class="s" style="left:2432.0px;top:1412.0px" width="38" height="44" viewBox="0 0 38 44"><path d="M18.7 2.2 Q26 6.5 34.6 9.2 L34.6 21 C34.6 30 27 37.5 18.7 40.6 C10.4 37.5 3.2 30 3.2 21 L3.2 9.2 Q11.4 6.5 18.7 2.2 Z" fill="#d6d7da"/><path d="M9.9 21.9 L15.5 27.6 L27.5 15.6" fill="none" stroke="#262930" stroke-width="3.4"/></svg>
<svg class="s" style="left:2430.0px;top:1468.0px" width="44" height="50" viewBox="0 0 44 50"><path d="M3.1 13.2 Q3.1 12.2 4.1 12.2 L10.6 12.2 L10.6 40.5 L30.1 40.5 L30.1 45.1 Q30.1 46.1 29.1 46.1 L4.1 46.1 Q3.1 46.1 3.1 45.1 Z" fill="#d6d7da"/><path d="M13.8 3.9 L33 3.9 L41.2 12 L41.2 37.5 Q41.2 38.5 40.2 38.5 L13.8 38.5 Q12.8 38.5 12.8 37.5 L12.8 4.9 Q12.8 3.9 13.8 3.9 Z" fill="#d6d7da"/><path d="M33 3.5 L33 12 L41.6 12" fill="none" stroke="#262930" stroke-width="1.6"/></svg>
<svg class="s" style="left:2426.0px;top:1530.0px" width="50" height="48" viewBox="0 0 50 48"><path d="M35.6 13.6 A15.8 15.8 0 1 0 35.2 34.6" fill="none" stroke="#d6d7da" stroke-width="6"/><path d="M30.8 19.6 L46 19.6 L46 4.4 Z" fill="#d6d7da"/></svg>
<svg class="s" style="left:2433.0px;top:1595.0px" width="36" height="36" viewBox="0 0 36 36"><rect x="2" y="2" width="31.3" height="31.8" rx="3" fill="#d6d7da"/><path d="M8.4 18 L26.4 18 M17.4 9.6 L17.4 27.2" stroke="#262930" stroke-width="3.2"/></svg>
<svg class="s" style="left:2433.0px;top:1655.0px" width="36" height="36" viewBox="0 0 36 36"><rect x="2" y="1.5" width="31.3" height="31.8" rx="3" fill="#d6d7da"/><path d="M8.4 17.4 L26.4 17.4" stroke="#262930" stroke-width="4.4"/></svg>
<div class="t" id="t112" style="left:2674.3px;top:604.0px;font-size:30px;font-weight:700;color:#f0f1f2;transform:scaleX(1.0274);">Selected tasks</div>
<svg class="s" style="left:3089.0px;top:602.0px" width="34" height="30" viewBox="0 0 34 30"><path d="M7.85 27 L7.85 7" stroke="#d6d7da" stroke-width="3"/><path d="M2.4 9.2 L13.3 9.2 L7.85 2.4 Z" fill="#d6d7da"/><path d="M15 4 L30.8 4 M15 11.2 L27.4 11.2 M15 18 L24 18 M15 25 L20.5 25" stroke="#d6d7da" stroke-width="3"/></svg>
<svg class="s" style="left:3143.0px;top:604.0px" width="29" height="24" viewBox="0 0 29 24"><g transform="scale(0.66)"><path d="M28.3 5.9 A13 13 0 0 0 8.8 18.2" fill="none" stroke="#d6d7da" stroke-width="3.6"/><path d="M1.8 16.6 L15.6 16.6 L8.7 24.6 Z" fill="#d6d7da"/><path d="M14 28.5 A13 13 0 0 0 33 15.8" fill="none" stroke="#d6d7da" stroke-width="3.6"/><path d="M26.6 17.2 L40.6 17.2 L33.6 9.4 Z" fill="#d6d7da"/></g></svg>
<svg class="s" style="left:3198.0px;top:602.0px" width="24" height="30" viewBox="0 0 24 30"><path d="M3.9 9.5 L19 9.5 L19 25.3 L3.9 25.3 Z" fill="#d6d7da"/><path d="M7.5 11 L7.5 24 M11.5 11 L11.5 24 M15.5 11 L15.5 24" stroke="#b5b7bb" stroke-width="0.8"/><path d="M5.6 4 L21.4 12.9" stroke="#d6d7da" stroke-width="3"/></svg>
<div class="t" id="t113" style="left:2491.0px;top:660.0px;font-size:25px;color:#f0f1f2;">Filter</div>
<div class="r" style="left:2559.0px;top:645.0px;width:674.0px;height:47.5px;background:#1f2126;border-radius:5px;"></div>
<div class="t" id="t114" style="left:2568.8px;top:660.0px;font-size:25px;color:#80868d;transform:scaleX(0.9256);">Type in task title...</div>
<div class="r" style="left:2483.7px;top:697px;width:750px;height:1531.4px;border:6px solid #0a83d4;box-sizing:border-box;border-radius:8px;background:#414851"></div>
<div class="clip" style="left:2490px;top:703.5px;width:707px;height:1490.5px">
<div class="r" style="left:2.5px;top:801.8px;width:704.5px;height:39.7px;background:#6a7180;"></div>
<svg class="s" style="left:9.5px;top:8.0px" width="29" height="27"><use href="#warn"/></svg>
<div class="t" id="t115" style="left:51.9px;top:11.0px;font-size:25px;color:#f0f1f2;transform:scaleX(0.9412);">P: Convert raw data (single-dataset)</div>
<svg class="s" style="left:10.0px;top:48.8px" width="26" height="26"><use href="#ok"/></svg>
<div class="t" id="t116" style="left:51.9px;top:51.0px;font-size:25px;color:#f0f1f2;transform:scaleX(0.9276);">P: Tags and names (single-dataset)</div>
<svg class="s" style="left:10.0px;top:88.8px" width="26" height="26"><use href="#ok"/></svg>
<div class="t" id="t117" style="left:51.9px;top:91.0px;font-size:25px;color:#f0f1f2;transform:scaleX(0.9470);">P: Mass alignment (single-dataset)</div>
<svg class="s" style="left:10.0px;top:128.8px" width="26" height="26"><use href="#ok"/></svg>
<div class="t" id="t118" style="left:51.9px;top:131.0px;font-size:25px;color:#f0f1f2;transform:scaleX(0.9206);">P: Register GeoJSON masks from QuPath (single-dataset)</div>
<svg class="s" style="left:10.0px;top:168.8px" width="26" height="26"><use href="#ok"/></svg>
<div class="t" id="t119" style="left:51.9px;top:171.0px;font-size:25px;color:#f0f1f2;transform:scaleX(0.9414);">P: Create merged project based on tags (merged-dataset)</div>
<svg class="s" style="left:10.0px;top:208.8px" width="26" height="26"><use href="#ok"/></svg>
<div class="t" id="t120" style="left:51.9px;top:211.0px;font-size:25px;color:#f0f1f2;transform:scaleX(0.9468);">P: Create merged project from select single-datasets (merged-dataset)</div>
<svg class="s" style="left:10.0px;top:248.8px" width="26" height="26"><use href="#ok"/></svg>
<div class="t" id="t121" style="left:51.9px;top:251.0px;font-size:25px;color:#f0f1f2;transform:scaleX(0.9468);">P: Create merged project from select single-datasets (merged-dataset)</div>
<svg class="s" style="left:10.0px;top:288.8px" width="26" height="26"><use href="#ok"/></svg>
<div class="t" id="t122" style="left:51.9px;top:291.0px;font-size:25px;color:#f0f1f2;transform:scaleX(0.9468);">P: Create merged project from select single-datasets (merged-dataset)</div>
<svg class="s" style="left:10.0px;top:328.8px" width="26" height="26"><use href="#ok"/></svg>
<div class="t" id="t123" style="left:51.8px;top:331.0px;font-size:25px;color:#f0f1f2;transform:scaleX(0.9557);">P: Normalization (single-dataset)</div>
<svg class="s" style="left:10.0px;top:368.8px" width="26" height="26"><use href="#ok"/></svg>
<div class="t" id="t124" style="left:51.8px;top:371.0px;font-size:25px;color:#f0f1f2;transform:scaleX(0.9736);">P: Normalization (multi-dataset)</div>
<svg class="s" style="left:10.0px;top:408.8px" width="26" height="26"><use href="#ok"/></svg>
<div class="t" id="t125" style="left:51.9px;top:411.0px;font-size:25px;color:#f0f1f2;transform:scaleX(0.9387);">P: Average mass spectrum (single-dataset)</div>
<svg class="s" style="left:9.5px;top:448.0px" width="29" height="27"><use href="#warn"/></svg>
<div class="t" id="t126" style="left:51.9px;top:451.0px;font-size:25px;color:#f0f1f2;transform:scaleX(0.9443);">P: Mass calibration (single-dataset)</div>
<svg class="s" style="left:10.0px;top:488.8px" width="26" height="26"><use href="#ok"/></svg>
<div class="t" id="t127" style="left:52.8px;top:491.0px;font-size:25px;color:#f0f1f2;transform:scaleX(0.9505);">W: Compare peaks (interactive, multi-dataset)</div>
<svg class="s" style="left:10.0px;top:528.8px" width="26" height="26"><use href="#ok"/></svg>
<div class="t" id="t128" style="left:52.8px;top:531.0px;font-size:25px;color:#f0f1f2;transform:scaleX(0.9634);">W: Annotate mass spectrum (multi-dataset)</div>
<svg class="s" style="left:10.0px;top:568.8px" width="26" height="26"><use href="#ok"/></svg>
<div class="t" id="t129" style="left:52.8px;top:571.0px;font-size:25px;color:#f0f1f2;transform:scaleX(0.9634);">W: Annotate mass spectrum (multi-dataset)</div>
<svg class="s" style="left:9.5px;top:608.0px" width="29" height="27"><use href="#warn"/></svg>
<div class="t" id="t130" style="left:52.8px;top:611.0px;font-size:25px;color:#f0f1f2;transform:scaleX(0.9736);">W: M/z feature detection (multi-dataset)</div>
<svg class="s" style="left:10.0px;top:648.8px" width="26" height="26"><use href="#ok"/></svg>
<div class="t" id="t131" style="left:52.8px;top:651.0px;font-size:25px;color:#f0f1f2;transform:scaleX(0.9736);">W: M/z feature detection (multi-dataset)</div>
<svg class="s" style="left:10.0px;top:688.8px" width="26" height="26"><use href="#ok"/></svg>
<div class="t" id="t132" style="left:52.8px;top:691.0px;font-size:25px;color:#f0f1f2;transform:scaleX(0.9645);">W: Extract ion centroids (single/multi-dataset)</div>
<svg class="s" style="left:10.0px;top:728.8px" width="26" height="26"><use href="#ok"/></svg>
<div class="t" id="t133" style="left:52.8px;top:731.0px;font-size:25px;color:#f0f1f2;transform:scaleX(0.9645);">W: Extract ion centroids (single/multi-dataset)</div>
<svg class="s" style="left:10.0px;top:768.8px" width="26" height="26"><use href="#ok"/></svg>
<div class="t" id="t134" style="left:52.8px;top:771.0px;font-size:25px;color:#f0f1f2;transform:scaleX(0.9644);">W: Filter ion centroids (multi-dataset)</div>
<svg class="s" style="left:10.0px;top:808.8px" width="26" height="26"><use href="#ok"/></svg>
<div class="t" id="t135" style="left:52.8px;top:811.0px;font-size:25px;color:#f0f1f2;transform:scaleX(0.9555);">W: Compare mosaic images (multi-dataset)</div>
<svg class="s" style="left:10.0px;top:848.8px" width="26" height="26"><use href="#ok"/></svg>
<div class="t" id="t136" style="left:52.8px;top:851.0px;font-size:25px;color:#f0f1f2;transform:scaleX(0.9555);">W: Compare mosaic images (multi-dataset)</div>
<svg class="s" style="left:10.0px;top:888.8px" width="26" height="26"><use href="#ok"/></svg>
<div class="t" id="t137" style="left:52.8px;top:891.0px;font-size:25px;color:#f0f1f2;transform:scaleX(0.9555);">W: Compare mosaic images (multi-dataset)</div>
<svg class="s" style="left:10.0px;top:928.8px" width="26" height="26"><use href="#ok"/></svg>
<div class="t" id="t138" style="left:52.8px;top:931.0px;font-size:25px;color:#f0f1f2;transform:scaleX(0.9464);">W: Unsupervised training (single-dataset)</div>
<svg class="s" style="left:10.0px;top:968.8px" width="26" height="26"><use href="#ok"/></svg>
<div class="t" id="t139" style="left:52.8px;top:971.0px;font-size:25px;color:#f0f1f2;transform:scaleX(0.9464);">W: Unsupervised training (single-dataset)</div>
<svg class="s" style="left:10.0px;top:1008.8px" width="26" height="26"><use href="#ok"/></svg>
<div class="t" id="t140" style="left:52.8px;top:1011.0px;font-size:25px;color:#f0f1f2;transform:scaleX(0.9591);">W: Unsupervised training (merged-project)</div>
<svg class="s" style="left:10.0px;top:1048.8px" width="26" height="26"><use href="#ok"/></svg>
<div class="t" id="t141" style="left:52.8px;top:1051.0px;font-size:25px;color:#f0f1f2;transform:scaleX(0.9591);">W: Unsupervised training (merged-project)</div>
<svg class="s" style="left:10.0px;top:1088.8px" width="26" height="26"><use href="#ok"/></svg>
<div class="t" id="t142" style="left:52.8px;top:1091.0px;font-size:25px;color:#f0f1f2;transform:scaleX(0.9428);">W: XGBoost training (single-dataset)</div>
<svg class="s" style="left:10.0px;top:1128.8px" width="26" height="26"><use href="#ok"/></svg>
<div class="t" id="t143" style="left:52.8px;top:1131.0px;font-size:25px;color:#f0f1f2;transform:scaleX(0.9428);">W: XGBoost training (single-dataset)</div>
<svg class="s" style="left:10.0px;top:1168.8px" width="26" height="26"><use href="#ok"/></svg>
<div class="t" id="t144" style="left:52.8px;top:1171.0px;font-size:25px;color:#f0f1f2;transform:scaleX(0.9428);">W: XGBoost training (single-dataset)</div>
<svg class="s" style="left:10.0px;top:1208.8px" width="26" height="26"><use href="#ok"/></svg>
<div class="t" id="t145" style="left:52.8px;top:1211.0px;font-size:25px;color:#f0f1f2;transform:scaleX(0.9428);">W: XGBoost training (single-dataset)</div>
<svg class="s" style="left:10.0px;top:1248.8px" width="26" height="26"><use href="#ok"/></svg>
<div class="t" id="t146" style="left:52.8px;top:1251.0px;font-size:25px;color:#f0f1f2;transform:scaleX(0.9428);">W: XGBoost training (single-dataset)</div>
<svg class="s" style="left:10.0px;top:1288.8px" width="26" height="26"><use href="#ok"/></svg>
<div class="t" id="t147" style="left:52.8px;top:1291.0px;font-size:25px;color:#f0f1f2;transform:scaleX(0.9428);">W: XGBoost training (single-dataset)</div>
<svg class="s" style="left:10.0px;top:1328.8px" width="26" height="26"><use href="#ok"/></svg>
<div class="t" id="t148" style="left:52.8px;top:1331.0px;font-size:25px;color:#f0f1f2;transform:scaleX(0.9428);">W: XGBoost training (single-dataset)</div>
<svg class="s" style="left:10.0px;top:1368.8px" width="26" height="26"><use href="#ok"/></svg>
<div class="t" id="t149" style="left:52.8px;top:1371.0px;font-size:25px;color:#f0f1f2;transform:scaleX(0.9428);">W: XGBoost training (single-dataset)</div>
<svg class="s" style="left:10.0px;top:1408.8px" width="26" height="26"><use href="#ok"/></svg>
<div class="t" id="t150" style="left:52.8px;top:1411.0px;font-size:25px;color:#f0f1f2;transform:scaleX(0.9428);">W: XGBoost training (single-dataset)</div>
<svg class="s" style="left:10.0px;top:1448.8px" width="26" height="26"><use href="#ok"/></svg>
<div class="t" id="t151" style="left:52.8px;top:1451.0px;font-size:25px;color:#f0f1f2;transform:scaleX(0.9428);">W: XGBoost training (single-dataset)</div>
<svg class="s" style="left:10.0px;top:1488.8px" width="26" height="26"><use href="#ok"/></svg>
<div class="t" id="t152" style="left:52.8px;top:1491.0px;font-size:25px;color:#f0f1f2;transform:scaleX(0.9428);">W: XGBoost training (single-dataset)</div>
</div>
<svg class="s" style="left:3203.5px;top:712.5px" width="18" height="12" viewBox="0 0 18 12"><path d="M1 11.5 L9 1 L17 11.5 Z" fill="#e8e8ea"/></svg>
<div class="r" style="left:3200.0px;top:728.0px;width:25.5px;height:6.5px;background:#262930;"></div>
<div class="r" style="left:3202.0px;top:737.0px;width:21.0px;height:283.5px;background:#6a7180;border-radius:4px;"></div>
<div class="r" style="left:3200.0px;top:2161.0px;width:25.5px;height:7.5px;background:#262930;"></div>
<svg class="s" style="left:3203.5px;top:2176.0px" width="18" height="12" viewBox="0 0 18 12"><path d="M1 0.5 L17 0.5 L9 11 Z" fill="#e8e8ea"/></svg>
<svg class="s" style="left:2498.0px;top:2200.5px" width="14" height="18" viewBox="0 0 14 18"><path d="M13 1 L13 17 L1.5 9 Z" fill="#e8e8ea"/></svg>
<div class="r" style="left:2518.0px;top:2194.0px;width:6.5px;height:27.0px;background:#262930;"></div>
<div class="r" style="left:2524.8px;top:2196.4px;width:568.6px;height:24.8px;background:#6a7180;border-radius:0 4px 4px 0;"></div>
<div class="r" style="left:3167.0px;top:2194.0px;width:7.5px;height:27.0px;background:#262930;"></div>
<svg class="s" style="left:3179.5px;top:2200.5px" width="14" height="18" viewBox="0 0 14 18"><path d="M1 1 L1 17 L12.5 9 Z" fill="#e8e8ea"/></svg>
<svg class="s" style="left:2490.0px;top:2240.0px" width="28" height="28" viewBox="0 0 28 28"><rect x="3.6" y="3.4" width="20" height="20" rx="3" fill="none" stroke="#e6e7e9" stroke-width="4.2"/></svg>
<div class="t" id="t153" style="left:2529.9px;top:2244.0px;font-size:25px;color:#f0f1f2;transform:scaleX(1.0541);">Instant validation</div>
<div class="t" id="t154" style="left:2577.0px;top:2285.0px;font-size:25px;color:#7d848c;transform:scaleX(1.0358);"><b>Tip.</b> Press <b>Delete</b> or <b>Backspace</b> to delete a task.</div>
<div class="t" id="t155" style="left:2652.7px;top:2319.0px;font-size:25px;color:#7d848c;transform:scaleX(1.0657);"><b>Tip.</b> Press <b>Ctrl+Z</b> to undo deletion.</div>
<div class="t" id="t156" style="left:2566.0px;top:2353.0px;font-size:25px;color:#7d848c;transform:scaleX(1.0775);"><b>Tip.</b> The order of tasks in the list does not matter.</div>
<div class="t" id="t157" style="left:2527.0px;top:2386.0px;font-size:25px;color:#7d848c;transform:scaleX(1.0463);"><b>Tip.</b> Tasks highlighted in <b>red</b> have missing dependencies.</div>
<div class="t" id="t158" style="left:2581.0px;top:2420.0px;font-size:25px;color:#7d848c;transform:scaleX(1.0354);"><b>Tip.</b> Tasks with warning sign have invalid values.</div>
<div class="r" style="left:0.0px;top:2456.0px;width:3238.0px;height:61.0px;background:#434951;border-radius:0 0 8px 8px;"></div>
<div class="t" id="t159" style="left:1924.8px;top:2478.0px;font-size:25px;color:#f0f1f2;transform:scaleX(1.0455);"><b>3</b> W: Compare mosaic images (multi-dataset) tasks | <b>186</b> tasks in total</div>
<div class="r" style="left:2753.7px;top:2462.7px;width:126.1px;height:50.0px;background:#33cc66;"></div>
<div class="t" id="t160" style="left:2763.9px;top:2474.0px;font-size:33px;color:#0b0b0b;transform:scaleX(1.0598);">Editing</div>
<svg class="s" style="left:2903.0px;top:2474.0px" width="26" height="26"><use href="#help"/></svg>
<svg class="s" style="left:2960.0px;top:2472.0px" width="32" height="30" viewBox="0 0 32 30"><circle cx="11" cy="13" r="5.5" fill="none" stroke="#d6d7da" stroke-width="2.2"/><path d="M2 28 C3 21 8 19.5 11 19.5 C14 19.5 19 21 20 28" fill="none" stroke="#d6d7da" stroke-width="2.2"/><path d="M14 3 L30 3 L30 14 L24 14 L20 18 L20 14" fill="none" stroke="#d6d7da" stroke-width="2.2"/></svg>
<svg class="s" style="left:3021.0px;top:2472.0px" width="32" height="30" viewBox="0 0 32 30"><path d="M15 5 A11 11 0 1 0 27 19 A9 9 0 0 1 15 5 Z" fill="#d6d7da"/><path d="M24 2 L25.5 6 L29.5 7.5 L25.5 9 L24 13 L22.5 9 L18.5 7.5 L22.5 6 Z" fill="#d6d7da"/></svg>
<svg class="s" style="left:3083.0px;top:2471.0px" width="26" height="31" viewBox="0 0 26 31"><rect x="1" y="4" width="23" height="26" rx="2" fill="#d6d7da"/><rect x="7" y="1" width="11" height="6" rx="1.5" fill="#d6d7da"/><path d="M6 13 L19 13 M6 18 L19 18 M6 23 L14 23" stroke="#454a52" stroke-width="2.4"/></svg>
<svg class="s" style="left:3142.0px;top:2473.0px" width="28" height="27" viewBox="0 0 28 27"><rect x="1.5" y="1.5" width="25" height="24" rx="2" fill="none" stroke="#d6d7da" stroke-width="2.6"/><path d="M1.5 6.5 L26.5 6.5" stroke="#d6d7da" stroke-width="2.6"/><path d="M7 11 L12 15 L7 19 M13.5 20 L20 20" fill="none" stroke="#d6d7da" stroke-width="2.4"/></svg>
<div class="t" id="t161" style="left:3205.0px;top:2476.0px;font-size:27px;color:#d6d7da;transform:scaleX(1.2222);">{}</div></body></html>
